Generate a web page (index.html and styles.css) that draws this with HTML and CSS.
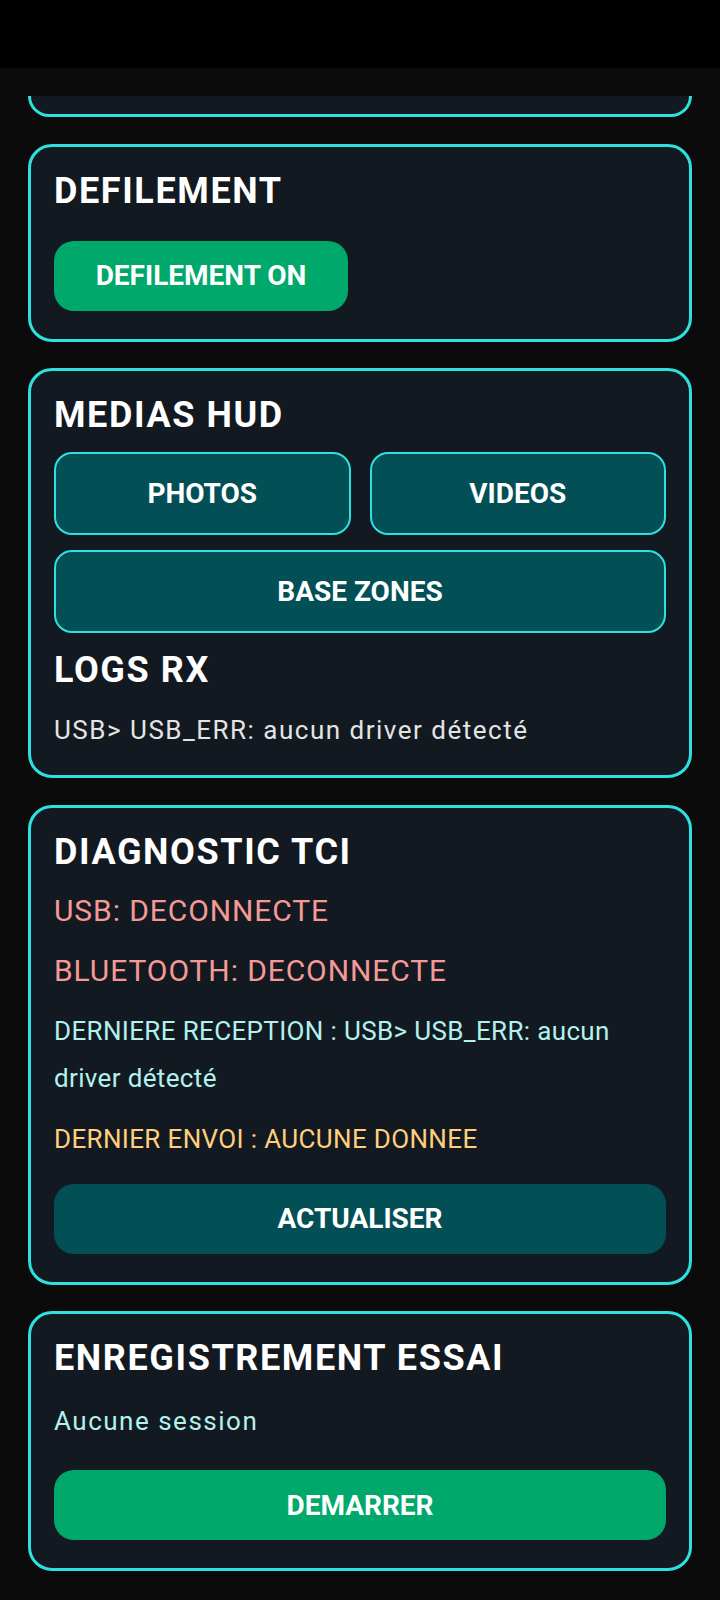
FILE: index.html
```html
<!DOCTYPE html>
<html lang="fr">
<head>
<meta charset="utf-8">
<title>HUD</title>
<link rel="stylesheet" href="styles.css">
</head>
<body>
<div class="statusbar"></div>
<main class="content">
  <div class="card card-tail"></div>

  <section class="card card-scroll">
    <h2 class="title">DEFILEMENT</h2>
    <button class="btn btn-green btn-auto">DEFILEMENT ON</button>
  </section>

  <section class="card card-media">
    <h2 class="title">MEDIAS HUD</h2>
    <div class="btn-grid">
      <button class="btn btn-teal btn-outline">PHOTOS</button>
      <button class="btn btn-teal btn-outline">VIDEOS</button>
      <button class="btn btn-teal btn-outline btn-wide">BASE ZONES</button>
    </div>
    <h2 class="title title-logs">LOGS RX</h2>
    <p class="log-text">USB&gt; USB_ERR: aucun driver détecté</p>
  </section>

  <section class="card card-diag">
    <h2 class="title">DIAGNOSTIC TCI</h2>
    <p class="status status-usb">USB: DECONNECTE</p>
    <p class="status status-bt">BLUETOOTH: DECONNECTE</p>
    <p class="info info-rx">DERNIERE RECEPTION : USB&gt; USB_ERR: aucun driver détecté</p>
    <p class="info info-tx">DERNIER ENVOI : AUCUNE DONNEE</p>
    <button class="btn btn-teal btn-full btn-refresh">ACTUALISER</button>
  </section>

  <section class="card card-rec">
    <h2 class="title">ENREGISTREMENT ESSAI</h2>
    <p class="info info-session">Aucune session</p>
    <button class="btn btn-green btn-full btn-start">DEMARRER</button>
  </section>
</main>
</body>
</html>
```

FILE: styles.css
```css
* {
  box-sizing: border-box;
}

html, body {
  margin: 0;
  padding: 0;
}

body {
  width: 720px;
  height: 1600px;
  background: #0b0b0b;
  font-family: Roboto, "Liberation Sans", sans-serif;
  color: #ffffff;
  overflow: hidden;
}

.statusbar {
  height: 68px;
  background: #000000;
}

.content {
  padding: 28px 28px 0;
  display: flex;
  flex-direction: column;
  gap: 26.5px;
}

.card {
  background: #121920;
  border: 3px solid #2fe0e0;
  border-radius: 24px;
  padding: 23px 23px 28px;
  display: flex;
  flex-direction: column;
  align-items: stretch;
}

.card-tail {
  height: 21px;
  border-top: none;
  border-radius: 0 0 24px 24px;
  padding: 0;
}

.title {
  margin: 0;
  font-size: 36px;
  line-height: 42px;
  font-weight: 700;
  letter-spacing: 1.6px;
  color: #ffffff;
}

.btn {
  font-family: Roboto, "Liberation Sans", sans-serif;
  font-size: 28px;
  font-weight: 700;
  color: #ffffff;
  border: none;
  border-radius: 20px;
  height: 70px;
  padding: 0;
  display: flex;
  align-items: center;
  justify-content: center;
  cursor: pointer;
}

.btn-green {
  background: #00a86b;
}

.btn-teal {
  background: #034f56;
}

.btn-auto {
  align-self: flex-start;
  width: 294px;
  margin-top: 29px;
}

.btn-outline {
  border: 2px solid #2fe0e0;
  height: 83px;
  border-radius: 18px;
}

.btn-grid {
  margin-top: 16px;
  display: grid;
  grid-template-columns: 1fr 1fr;
  column-gap: 19px;
  row-gap: 15px;
}

.btn-wide {
  grid-column: 1 / span 2;
}

.title-logs {
  margin-top: 16px;
}

.log-text {
  margin: 16px 0 0;
  font-size: 26px;
  line-height: 46px;
  letter-spacing: 1.5px;
  color: #e4e4e4;
}

.card-media {
  padding-bottom: 22px;
}

.status {
  margin: 0;
  font-size: 30px;
  line-height: 36px;
  letter-spacing: 0.9px;
  color: #f49a96;
}

.status-usb {
  margin-top: 20px;
}

.status-bt {
  margin-top: 24px;
}

.info {
  margin: 0;
  font-size: 26px;
  line-height: 47px;
  letter-spacing: 0.35px;
}

.info-rx {
  margin-top: 19px;
  color: #b3f1ef;
}

.info-tx {
  margin-top: 14px;
  color: #ffcf7d;
}

.btn-full {
  width: 100%;
}

.btn-refresh {
  margin-top: 21px;
}

.info-session {
  margin-top: 19px;
  letter-spacing: 1.5px;
  color: #b3f1ef;
}

.btn-start {
  margin-top: 25px;
}
```
